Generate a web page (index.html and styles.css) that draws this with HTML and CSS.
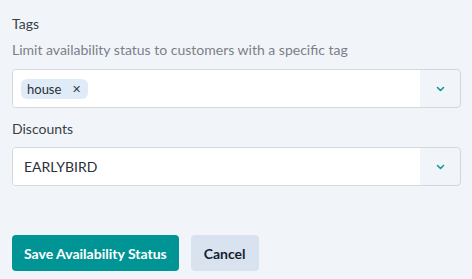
FILE: index.html
```html
<!DOCTYPE html>
<html lang="en">

<head>
    <meta charset="utf-8">
    <meta name="viewport" content="width=device-width, initial-scale=1.0">
    <title>Availability Status</title>
    <link rel="stylesheet" href="styles.css">
</head>

<body>
    <form class="status-form">
        <div class="field">
            <label class="label">Tags</label>
            <p class="hint">Limit availability status to customers with a specific tag</p>
            <div class="select">
                <div class="select-value">
                    <span class="chip">house <span class="chip-x">&#x2715;</span></span>
                </div>
                <div class="select-arrow">
                    <svg width="9" height="6" viewBox="0 0 9 6"><path d="M1.5 1.5l3 3 3-3" fill="none" stroke="#0b9a9c" stroke-width="1.6" stroke-linecap="round" stroke-linejoin="round"/></svg>
                </div>
            </div>
        </div>

        <div class="field">
            <label class="label">Discounts</label>
            <div class="select">
                <div class="select-value">EARLYBIRD</div>
                <div class="select-arrow">
                    <svg width="9" height="6" viewBox="0 0 9 6"><path d="M1.5 1.5l3 3 3-3" fill="none" stroke="#0b9a9c" stroke-width="1.6" stroke-linecap="round" stroke-linejoin="round"/></svg>
                </div>
            </div>
        </div>

        <div class="actions">
            <button type="button" class="btn btn-primary">Save Availability Status</button>
            <button type="button" class="btn btn-secondary">Cancel</button>
        </div>
    </form>
</body>

</html>
```

FILE: styles.css
```css
body {
    margin: 0;
    background-color: #f1f5f9;
    font-family: Lato, "Open Sans", sans-serif;
    font-size: 14px;
    color: #1f2937;
}

.status-form {
    padding: 15px 11px 0 12px;
}

.field {
    margin-bottom: 12px;
}

.label {
    display: block;
    font-size: 14px;
    color: #3a3f47;
    line-height: 18px;
}

.hint {
    margin: 8px 0 10px;
    color: #7b8088;
    line-height: 18px;
}

.label + .select {
    margin-top: 9px;
}

.select {
    display: flex;
    height: 39px;
    box-sizing: border-box;
    border: 1px solid #d4d8dd;
    border-radius: 4px;
    background-color: #f1f5f9;
    overflow: hidden;
}

.select-value {
    flex: 1;
    display: flex;
    align-items: center;
    padding: 0 11px;
    background-color: #fff;
    color: #2b2f36;
    font-size: 14px;
}

.select-value:has(.chip) {
    padding-left: 8px;
}

.select-arrow {
    width: 40px;
    display: flex;
    align-items: center;
    justify-content: center;
}

.chip {
    display: inline-flex;
    align-items: center;
    height: 20px;
    padding: 0 7px 0 6px;
    border-radius: 6px;
    background-color: #dfecf8;
    color: #2b2f36;
    font-size: 13px;
}

.chip-x {
    margin-left: 11px;
    font-size: 11px;
    color: #3a3f47;
}

.actions {
    display: flex;
    gap: 12px;
    margin-top: 49px;
}

.btn {
    height: 36px;
    border: none;
    border-radius: 4px;
    font-family: Lato, sans-serif;
    font-weight: bold;
    font-size: 14px;
    padding: 0 12px;
}

.btn-primary {
    background-color: #009495;
    color: #fff;
}

.btn-secondary {
    background-color: #d9e3f0;
    color: #161d2f;
    padding: 0 13px;
}
```
